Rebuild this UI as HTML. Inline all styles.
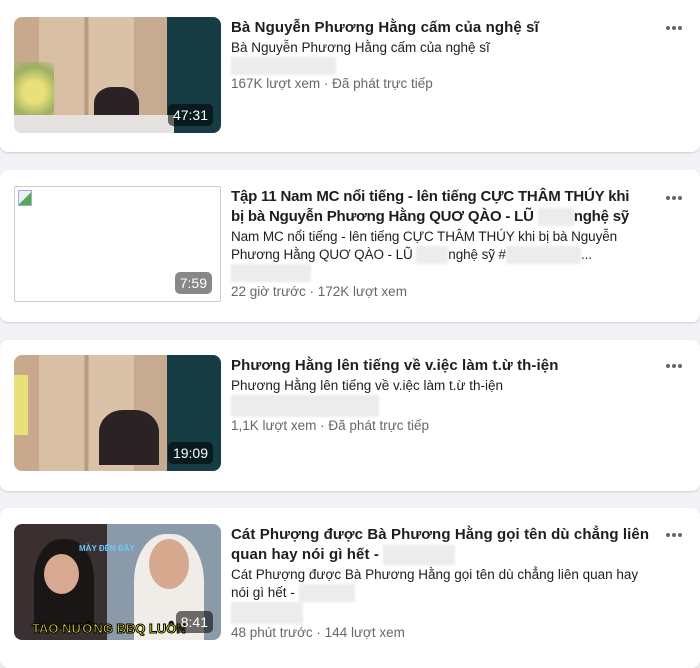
<!DOCTYPE html>
<html><head><meta charset="utf-8"><style>
*{margin:0;padding:0;box-sizing:border-box}
body{width:700px;height:653px;background:#f0f2f5;font-family:"Liberation Sans",sans-serif;position:relative;overflow:hidden}
.card{position:absolute;left:0;width:700px;background:#fff;border-radius:8px;box-shadow:0 1px 2px rgba(0,0,0,.15)}
.th{position:absolute;left:14px;width:207px;height:116px;border-radius:8px;overflow:hidden}
.dur{position:absolute;right:8px;bottom:7px;background:rgba(0,0,0,.55);color:#fff;font-size:14px;padding:3px 5px;border-radius:5px}
.tx{position:absolute;left:231px;width:440px;white-space:nowrap}
.t{font-size:15px;font-weight:bold;color:#1c1e21;line-height:20px;letter-spacing:0.1px}
.s{font-size:13.5px;color:#1c1e21;line-height:18px;margin-top:1px}
.m{font-size:13.5px;color:#65676b;line-height:18px}
.bl{display:inline-block;background:#ececec;height:18px;vertical-align:middle;filter:blur(1px)}
.dots{position:absolute;right:18px;width:16px;height:4px;display:flex;justify-content:space-between}
.dots i{width:4px;height:4px;border-radius:50%;background:#606770}
.office{background:linear-gradient(90deg,#c9a98b 0 12%,#d8bfa4 12% 34%,#b99a80 34% 36%,#d9c2a8 36% 58%,#c7ab90 58% 74%,#163c44 74% 100%)}
</style></head><body>

<div class="card" style="top:-8px;height:160px">
 <div class="th office" style="top:25px">
  <div style="position:absolute;left:0;top:45px;width:40px;height:60px;background:radial-gradient(circle,#e8e07a 30%,#9ab060 70%,transparent)"></div>
  <div style="position:absolute;left:80px;top:70px;width:45px;height:40px;background:#2a2225;border-radius:40% 40% 0 0"></div>
  <div style="position:absolute;left:0;top:98px;width:160px;height:18px;background:#e6e2df"></div>
  <div class="dur">47:31</div></div>
 <div class="tx" style="top:26px"><div class="t">Bà Nguyễn Phương Hằng cấm của nghệ sĩ</div>
 <div class="s">Bà Nguyễn Phương Hằng cấm của nghệ sĩ</div>
 <div><span class="bl" style="width:105px"></span></div>
 <div class="m">167K lượt xem · Đã phát trực tiếp</div></div>
 <div class="dots" style="top:34px"><i></i><i></i><i></i></div>
</div>

<div class="card" style="top:170px;height:152px">
 <div class="th" style="top:16px;border:1px solid #ccc;border-radius:2px;background:#fff">
  <div style="position:absolute;left:3px;top:3px;width:14px;height:16px;border:1px solid #aac;background:linear-gradient(135deg,#e8f0f8 50%,#5a5 50%)"></div>
  <div class="dur" style="background:#888">7:59</div></div>
 <div class="tx" style="top:17px"><div class="t" style="letter-spacing:-0.2px">Tập 11 Nam MC nổi tiếng - lên tiếng CỰC THÂM THÚY khi<br>bị bà Nguyễn Phương Hằng QUƠ QÀO - LŨ <span class="bl" style="width:36px"></span>nghệ sỹ</div>
 <div class="s" style="letter-spacing:-0.1px">Nam MC nổi tiếng - lên tiếng CỰC THÂM THÚY khi bị bà Nguyễn<br>Phương Hằng QUƠ QÀO - LŨ <span class="bl" style="width:32px"></span>nghệ sỹ #<span class="bl" style="width:75px"></span>...</div>
 <div><span class="bl" style="width:80px"></span></div>
 <div class="m">22 giờ trước · 172K lượt xem</div></div>
 <div class="dots" style="top:26px"><i></i><i></i><i></i></div>
</div>

<div class="card" style="top:340px;height:151px">
 <div class="th office" style="top:15px">
  <div style="position:absolute;left:85px;top:55px;width:60px;height:55px;background:#2a2225;border-radius:40% 40% 0 0"></div>
  <div style="position:absolute;left:0;top:20px;width:14px;height:60px;background:#e8e07a"></div>
  <div class="dur">19:09</div></div>
 <div class="tx" style="top:16px"><div class="t">Phương Hằng lên tiếng về v.iệc làm t.ừ th-iện</div>
 <div class="s">Phương Hằng lên tiếng về v.iệc làm t.ừ th-iện</div>
 <div><span class="bl" style="width:148px;height:22px"></span></div>
 <div class="m">1,1K lượt xem · Đã phát trực tiếp</div></div>
 <div class="dots" style="top:24px"><i></i><i></i><i></i></div>
</div>

<div class="card" style="top:508px;height:160px">
 <div class="th" style="top:16px;background:linear-gradient(90deg,#3a3032 0 45%,#8a9aa8 45% 100%)">
  <div style="position:absolute;left:20px;top:15px;width:60px;height:90px;background:#1a1616;border-radius:45% 45% 0 0"></div>
  <div style="position:absolute;left:30px;top:30px;width:35px;height:40px;background:#d8a890;border-radius:50%"></div>
  <div style="position:absolute;left:120px;top:10px;width:70px;height:106px;background:#f0ece8;border-radius:45% 45% 0 0"></div>
  <div style="position:absolute;left:135px;top:15px;width:40px;height:50px;background:#d6a88e;border-radius:50%"></div>
  <div style="position:absolute;left:65px;top:20px;color:#6cf;font-size:8px;font-weight:bold">MÀY ĐẾN ĐÂY</div>
  <div style="position:absolute;left:18px;bottom:4px;color:#ff3;font-size:13px;font-weight:bold;-webkit-text-stroke:1px #000">TAO NƯỚNG BBQ LUÔN</div>
  <div class="dur">8:41</div></div>
 <div class="tx" style="top:17px"><div class="t">Cát Phượng được Bà Phương Hằng gọi tên dù chẳng liên<br>quan hay nói gì hết - <span class="bl" style="width:72px;height:20px"></span></div>
 <div class="s">Cát Phượng được Bà Phương Hằng gọi tên dù chẳng liên quan hay<br>nói gì hết - <span class="bl" style="width:56px"></span></div>
 <div><span class="bl" style="width:72px;height:22px"></span></div>
 <div class="m">48 phút trước · 144 lượt xem</div></div>
 <div class="dots" style="top:25px"><i></i><i></i><i></i></div>
</div>
</body></html>
